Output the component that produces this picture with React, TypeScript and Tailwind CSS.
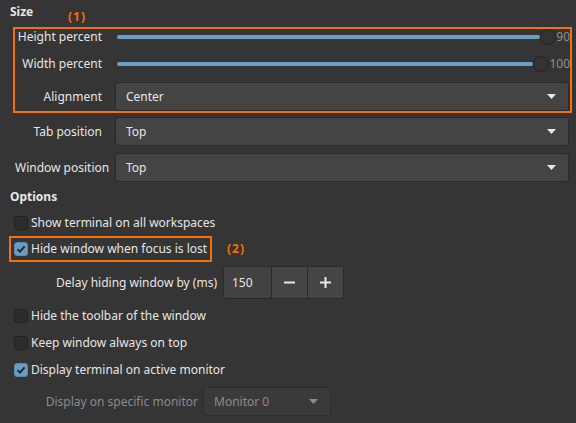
import React from 'react';

const ORANGE = 'border-[#f5700a]';

function Arrow({ disabled }: { disabled?: boolean }) {
  return (
    <svg width="9" height="5" viewBox="0 0 9 5" className="shrink-0">
      <polygon points="0,0 9,0 4.5,5" fill={disabled ? '#8a8a8a' : '#e8e8e8'} />
    </svg>
  );
}

function Combo({ value, width, disabled }: { value: string; width: string; disabled?: boolean }) {
  return (
    <div
      className={`${width} h-[29px] flex items-center justify-between pl-[10px] pr-[12px] rounded-[3px] border ${
        disabled ? 'bg-[#3a3a3a] border-[#2e2e2e] text-[#8a8a8a]' : 'bg-[#444444] border-[#2a2a2a] text-[#e6e6e6]'
      }`}
    >
      <span>{value}</span>
      <Arrow disabled={disabled} />
    </div>
  );
}

function Slider({ value }: { value: number }) {
  return (
    <div className="flex-1 flex items-center pl-[2px]">
      <div className="flex-1 h-[4px] rounded-full bg-[#6c9fc4]" />
      <div className="w-[16px] h-[16px] rounded-full bg-[#333333] border border-[#242424] shrink-0" />
      <span className="text-[#8e8e8e]">{value}</span>
    </div>
  );
}

function Check({ checked, label }: { checked?: boolean; label: string }) {
  return (
    <div className="h-[18px] flex items-center gap-[3px]">
      <div
        className={`w-[14px] h-[14px] rounded-[3px] border flex items-center justify-center ${
          checked ? 'bg-[#6b9dc4] border-[#5b87aa]' : 'bg-[#2c2c2c] border-[#222222]'
        }`}
      >
        {checked && (
          <svg width="10" height="10" viewBox="0 0 10 10">
            <polyline points="1.5,5.2 4,7.6 8.6,2.4" fill="none" stroke="#1e2a34" strokeWidth="2" />
          </svg>
        )}
      </div>
      <span>{label}</span>
    </div>
  );
}

export default function App() {
  return (
    <div
      className="relative w-[576px] h-[423px] overflow-hidden bg-[#353535] text-[#e6e6e6] text-[12px] leading-[18px]"
      style={{ fontFamily: '"Noto Sans", "Open Sans", sans-serif' }}
    >
      {/* annotations */}
      <span className="absolute left-[68px] top-[8px] text-[#f5700a] font-bold tracking-[1px]">(1)</span>
      <span className="absolute left-[227px] top-[240px] text-[#f5700a] font-bold tracking-[1px]">(2)</span>

      <div className="h-[27px] pl-[10px] pt-[3px] font-bold">Size</div>

      <div className={`ml-[13px] w-[559px] h-[86px] border-2 ${ORANGE} flex flex-col`}>
        <div className="h-[16px] flex items-center">
          <div className="w-[87px] text-right shrink-0">Height percent</div>
          <div className="ml-[13px] flex-1 flex">
            <Slider value={90} />
          </div>
        </div>
        <div className="mt-[11px] h-[16px] flex items-center">
          <div className="w-[87px] text-right shrink-0">Width percent</div>
          <div className="ml-[13px] flex-1 flex">
            <Slider value={100} />
          </div>
        </div>
        <div className="mt-[10px] flex items-center">
          <div className="w-[87px] text-right shrink-0">Alignment</div>
          <div className="ml-[13px]">
            <Combo value="Center" width="w-[454px]" />
          </div>
        </div>
      </div>

      <div className="mt-[4px] pl-[15px] flex items-center">
        <div className="w-[87px] text-right shrink-0">Tab position</div>
        <div className="ml-[13px]">
          <Combo value="Top" width="w-[454px]" />
        </div>
      </div>
      <div className="mt-[7px] pl-[15px] flex items-center">
        <div className="w-[87px] text-right shrink-0 whitespace-nowrap">Window position</div>
        <div className="ml-[13px]">
          <Combo value="Top" width="w-[454px]" />
        </div>
      </div>

      <div className="mt-[6px] pl-[10px] font-bold">Options</div>

      <div className="mt-[8px] pl-[14px]">
        <Check label="Show terminal on all workspaces" />
      </div>
      <div className={`mt-[4px] ml-[9px] w-[203px] h-[26px] border-2 ${ORANGE} pl-[3px] pt-[2px]`}>
        <Check checked label="Hide window when focus is lost" />
      </div>

      <div className="mt-[4px] flex items-center">
        <div className="w-[217px] text-right">Delay hiding window by (ms)</div>
        <div className="ml-[6px] h-[33px] flex rounded-[3px] border border-[#2a2a2a] bg-[#424242] overflow-hidden">
          <div className="w-[47px] flex items-center pl-[8px]">150</div>
          <div className="w-[36px] border-l border-[#2a2a2a] bg-[#454545] flex items-center justify-center">
            <svg width="11" height="11" viewBox="0 0 11 11">
              <line x1="0" y1="5.5" x2="11" y2="5.5" stroke="#e8e8e8" strokeWidth="2" />
            </svg>
          </div>
          <div className="w-[36px] border-l border-[#2a2a2a] bg-[#454545] flex items-center justify-center">
            <svg width="11" height="11" viewBox="0 0 11 11">
              <line x1="0" y1="5.5" x2="11" y2="5.5" stroke="#e8e8e8" strokeWidth="2" />
              <line x1="5.5" y1="0" x2="5.5" y2="11" stroke="#e8e8e8" strokeWidth="2" />
            </svg>
          </div>
        </div>
      </div>

      <div className="mt-[8px] pl-[14px]">
        <Check label="Hide the toolbar of the window" />
      </div>
      <div className="mt-[9px] pl-[14px]">
        <Check label="Keep window always on top" />
      </div>
      <div className="mt-[9px] pl-[14px]">
        <Check checked label="Display terminal on active monitor" />
      </div>

      <div className="mt-[8px] flex items-center">
        <div className="w-[198px] text-right text-[#8a8a8a]">Display on specific monitor</div>
        <div className="ml-[5px]">
          <Combo value="Monitor 0" width="w-[128px]" disabled />
        </div>
      </div>
    </div>
  );
}
